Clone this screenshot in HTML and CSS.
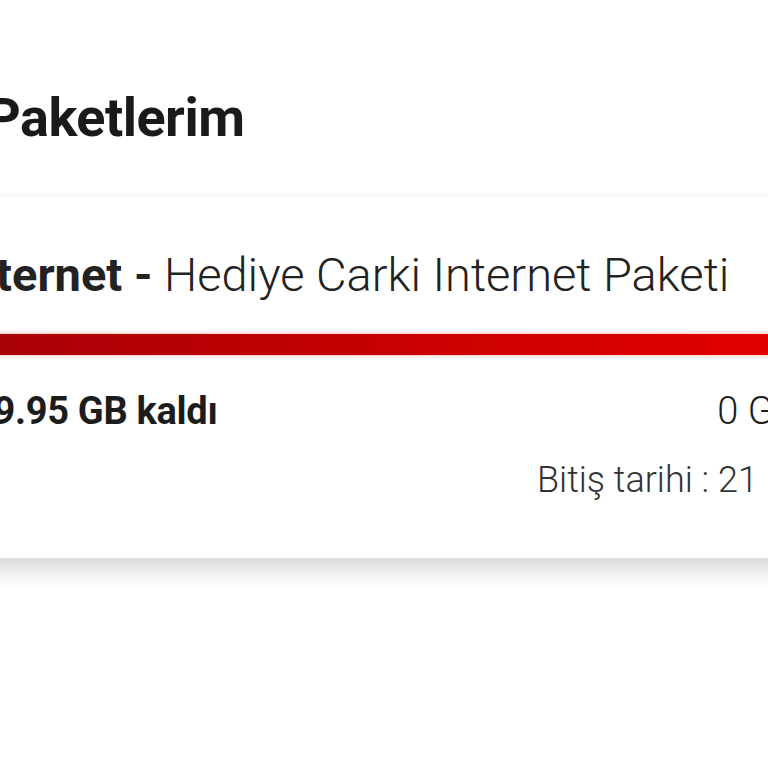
FILE: index.html
```html
<!DOCTYPE html>
<html lang="tr">
<head>
  <meta charset="UTF-8">
  <meta name="viewport" content="width=device-width, initial-scale=1.0">
  <title>Paketlerim</title>
  <link rel="stylesheet" href="styles.css">
</head>
<body>
  <div class="page">
    <h1 class="title">Paketlerim</h1>

    <div class="card">
      <div class="card-title"><b>Internet -</b> Hediye Carki Internet Paketi</div>
      <div class="bar"><div class="bar-fill"></div></div>
      <div class="row">
        <span class="left">99.95 GB kaldı</span>
        <span class="total">0 GB</span>
      </div>
      <div class="end-date">Bitiş tarihi : 21 Nisan 2024</div>
    </div>
  </div>
</body>
</html>
```

FILE: styles.css
```css
body {
  margin: 0;
  padding: 0;
  background-color: #ffffff;
  font-family: Roboto, "Liberation Sans", sans-serif;
  color: #1c1c1c;
  overflow: hidden;
  height: 768px;
}

.page {
  width: 1000px;
  margin-left: -14px;
  padding-top: 78px;
}

.title {
  margin: 0;
  font-size: 54px;
  font-weight: 700;
  letter-spacing: -0.5px;
  line-height: 80px;
  color: #1a1a1a;
}

.card {
  margin-top: 34px;
  margin-left: -40px;
  background-color: #ffffff;
  border-top: 6px solid #fafafa;
  box-shadow: 0 18px 22px -8px rgba(0, 0, 0, 0.16);
  border-bottom: 2px solid #dedede;
  padding: 42px 0 54px 10px;
}

.card-title {
  font-size: 47px;
  font-weight: 300;
  line-height: 70px;
  color: #222;
  white-space: nowrap;
}

.card-title b {
  font-weight: 700;
}

.bar {
  margin-top: 24px;
  margin-left: -60px;
  width: 1100px;
  height: 21px;
  box-shadow: 0 0 5px rgba(230, 0, 0, 0.35);
}

.bar-fill {
  height: 100%;
  background: linear-gradient(to right, #a00008 0%, #cc0000 50%, #f20000 100%);
}

.row {
  display: flex;
  justify-content: space-between;
  width: 825px;
  margin-top: 34px;
  margin-left: 16px;
  font-size: 38px;
  line-height: 44px;
  white-space: nowrap;
}

.left {
  font-weight: 700;
  letter-spacing: -0.3px;
}

.total {
  font-weight: 300;
}

.end-date {
  margin-top: 23px;
  margin-left: 581px;
  font-size: 36px;
  font-weight: 300;
  line-height: 48px;
  color: #333;
  white-space: nowrap;
}
```
